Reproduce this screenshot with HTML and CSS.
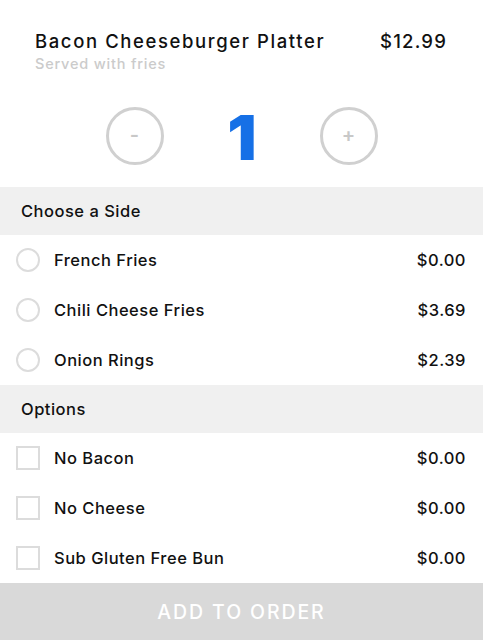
FILE: index.html
```html
<!DOCTYPE html>
<html>
<head>
<meta charset="utf-8">
<link rel="stylesheet" href="styles.css">
</head>
<body>
<div class="page">
  <header class="item">
    <div class="item-row">
      <div class="item-name">Bacon Cheeseburger Platter</div>
      <div class="item-price">$12.99</div>
    </div>
    <div class="item-sub">Served with fries</div>
  </header>
  <div class="qty">
    <div class="qty-btn">-</div>
    <div class="qty-num">1</div>
    <div class="qty-btn">+</div>
  </div>
  <div class="section">Choose a Side</div>
  <div class="row"><span class="radio"></span><span class="label">French Fries</span><span class="price">$0.00</span></div>
  <div class="row"><span class="radio"></span><span class="label">Chili Cheese Fries</span><span class="price">$3.69</span></div>
  <div class="row"><span class="radio"></span><span class="label">Onion Rings</span><span class="price">$2.39</span></div>
  <div class="section">Options</div>
  <div class="row"><span class="check"></span><span class="label">No Bacon</span><span class="price">$0.00</span></div>
  <div class="row"><span class="check"></span><span class="label">No Cheese</span><span class="price">$0.00</span></div>
  <div class="row"><span class="check"></span><span class="label">Sub Gluten Free Bun</span><span class="price">$0.00</span></div>
  <div class="add-btn">ADD TO ORDER</div>
</div>
</body>
</html>
```
FILE: styles.css
```css
* { box-sizing: border-box; }
html, body { margin: 0; padding: 0; background: #fff; }
body { font-family: Inter, "Open Sans", sans-serif; color: #111; font-weight: 460; }
.page { width: 483px; height: 640px; display: flex; flex-direction: column; overflow: hidden; }
.item { padding: 28px 36px 0 35px; height: 82px; }
.item-row { display: flex; justify-content: space-between; align-items: baseline; }
.item-name, .item-price { font-size: 18.5px; letter-spacing: 1.6px; line-height: 26px; }
.item-price { letter-spacing: 1.2px; }
.item-sub { font-size: 14.5px; color: #cbcbcb; letter-spacing: 0.8px; line-height: 20px; }
.qty { height: 105px; display: flex; justify-content: center; align-items: flex-start; gap: 53px; padding-top: 25px; }
.qty-btn { width: 58px; height: 58px; border: 3px solid #d0d0d0; border-radius: 50%; display: flex; align-items: center; justify-content: center; color: #c8c8c8; font-size: 20px; font-weight: 600; padding-bottom: 2px; }
.qty-num { width: 50px; text-align: center; color: #1670e6; font-weight: 900; font-size: 62px; line-height: 58px; transform: scaleX(1.05); padding-top: 2px; }
.section { height: 48px; background: #f0f0f0; padding-left: 21px; display: flex; align-items: center; font-size: 16.5px; letter-spacing: 0.5px; }
.row { height: 50px; display: flex; align-items: center; padding: 0 17px 0 16px; font-size: 16.5px; letter-spacing: 0.5px; }
.radio { width: 24px; height: 24px; border: 2px solid #dcdcdc; border-radius: 50%; flex: none; }
.check { width: 24px; height: 24px; border: 2px solid #dcdcdc; flex: none; }
.label { margin-left: 14px; flex: 1; }
.price { text-align: right; }
.add-btn { flex: 1; background: #d9d9d9; color: #fff; display: flex; align-items: center; justify-content: center; font-size: 19.5px; letter-spacing: 1.9px; }
```
